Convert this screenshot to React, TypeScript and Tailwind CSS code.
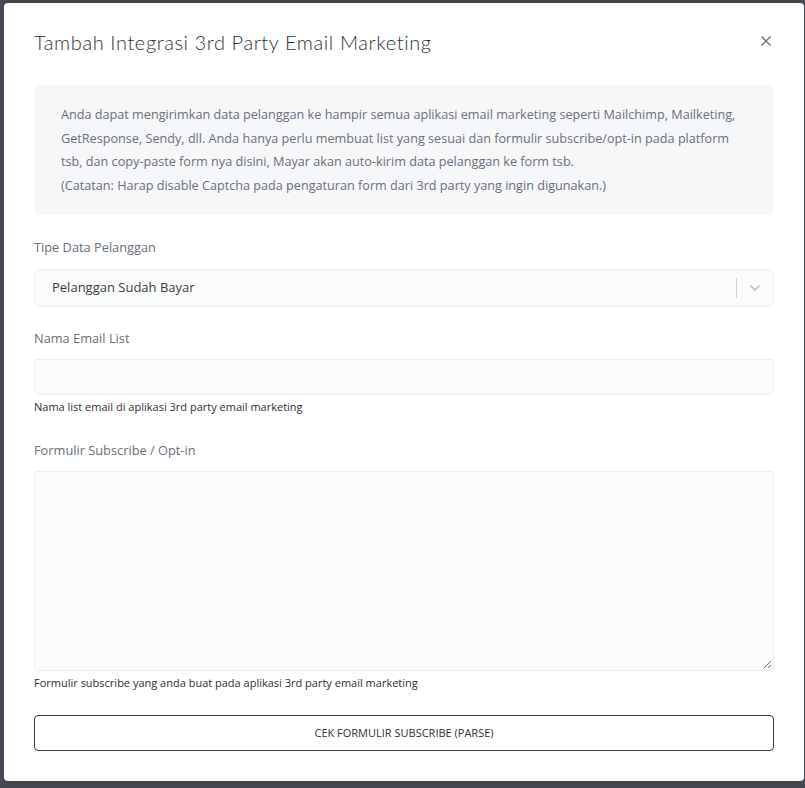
import React from "react";

export default function App() {
  return (
    <div className="w-[805px] h-[788px] bg-[#434850] pt-[3px] pl-[4px] overflow-hidden" style={{ fontFamily: '"Open Sans", sans-serif' }}>
      <div className="w-[800px] h-[778px] bg-white rounded-[4px] px-[30px] flex flex-col">
        <div className="flex items-center justify-between h-[80px] pb-[3px]">
          <h1 className="text-[20px] font-light text-[#2d3138] tracking-[0.6px]" style={{ fontFamily: 'Lato, sans-serif' }}>
            Tambah Integrasi 3rd Party Email Marketing
          </h1>
          <svg width="12" height="12" viewBox="0 0 12 12" className="mr-[2px] mt-[-2px]">
            <path d="M1.5 1.5 L10.5 10.5 M10.5 1.5 L1.5 10.5" stroke="#6b6f75" strokeWidth="1.3" />
          </svg>
        </div>
        <div className="mt-[2px] h-[130px] bg-[#f6f7f9] rounded-[4px] pl-[27px] pr-[32px] pt-[18px] text-[12.65px] leading-[23.5px] text-[#6b7079]">
          Anda dapat mengirimkan data pelanggan ke hampir semua aplikasi email marketing seperti Mailchimp, Mailketing, GetResponse, Sendy, dll. Anda hanya perlu membuat list yang sesuai dan formulir subscribe/opt-in pada platform tsb, dan copy-paste form nya disini, Mayar akan auto-kirim data pelanggan ke form tsb.
          <br />
          (Catatan: Harap disable Captcha pada pengaturan form dari 3rd party yang ingin digunakan.)
        </div>

        <label className="mt-[22px] text-[12.8px] leading-[20px] text-[#6b7079]">Tipe Data Pelanggan</label>
        <div className="mt-[12px] h-[38px] bg-[#fafbfb] border border-[#eceef0] rounded-[4px] flex items-center">
          <span className="flex-1 pl-[17px] text-[13px] text-[#3a3d42]">Pelanggan Sudah Bayar</span>
          <div className="w-px h-[20px] bg-[#cfd1d4]" />
          <div className="w-[36px] flex items-center justify-center">
            <svg width="12" height="8" viewBox="0 0 12 8">
              <path d="M1.5 1.5 L6 6 L10.5 1.5" stroke="#c8cacd" strokeWidth="2" fill="none" />
            </svg>
          </div>
        </div>

        <label className="mt-[21px] text-[12.8px] leading-[20px] text-[#6b7079]">Nama Email List</label>
        <div className="mt-[11px] h-[36px] bg-[#fafbfb] border border-[#eceef0] rounded-[4px]" />
        <p className="mt-[4px] text-[11px] leading-[16px] text-[#2d3138]">Nama list email di aplikasi 3rd party email marketing</p>

        <label className="mt-[25px] text-[12.8px] leading-[20px] text-[#6b7079]">Formulir Subscribe / Opt-in</label>
        <div className="mt-[11px] h-[200px] bg-[#fafbfb] border border-[#eceef0] rounded-[4px] relative">
          <svg width="9" height="9" viewBox="0 0 9 9" className="absolute right-[1px] bottom-[1px]">
            <path d="M8 1 L1 8 M8 5 L5 8" stroke="#777" strokeWidth="1" />
          </svg>
        </div>
        <p className="mt-[4px] text-[11px] leading-[16px] text-[#2d3138]">Formulir subscribe yang anda buat pada aplikasi 3rd party email marketing</p>

        <button className="mt-[24px] h-[36px] border border-[#3a3d42] rounded-[4px] text-[11px] text-[#2d3138] uppercase bg-white">
          Cek Formulir Subscribe (Parse)
        </button>
      </div>
    </div>
  );
}
